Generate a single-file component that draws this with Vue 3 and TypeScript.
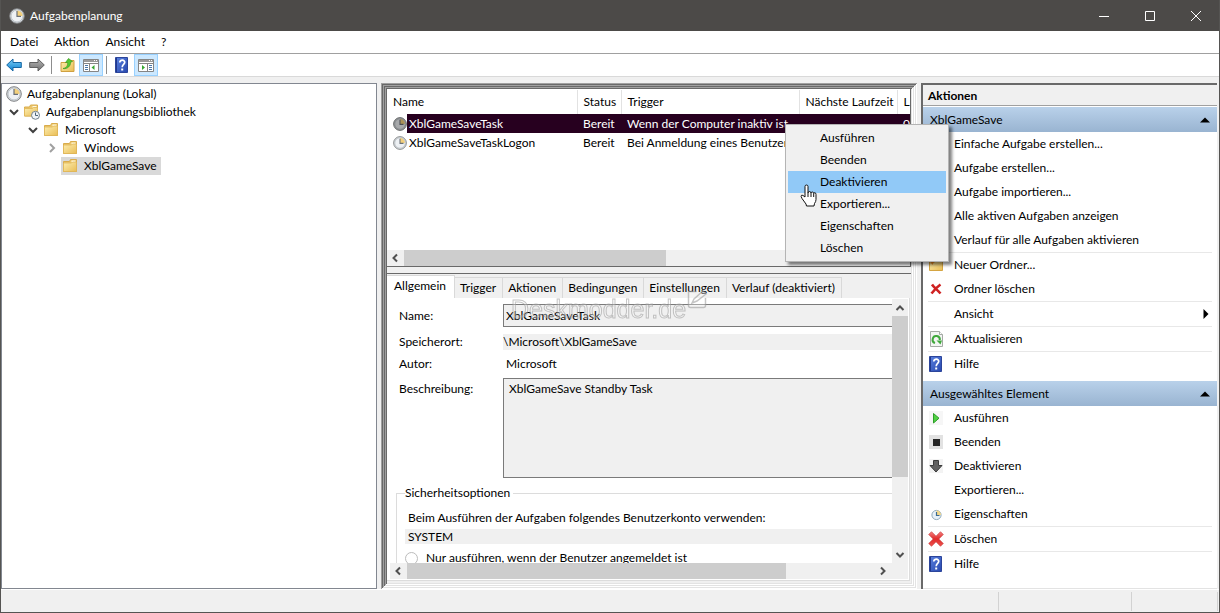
<script setup lang="ts">
import { ref } from 'vue'

interface TreeNode { label: string; icon: string; level: number; chevron: '' | 'open' | 'closed'; selected?: boolean }
interface Task { name: string; status: string; trigger: string; next: string; last: string; selected: boolean }
interface Action { label: string; icon?: string; separated?: boolean; submenu?: boolean }
interface ActionGroup { title: string; items: Action[] }

const menus: string[] = ['Datei', 'Aktion', 'Ansicht', '?']

const tree: TreeNode[] = [
  { label: 'Aufgabenplanung (Lokal)', icon: 'clock', level: 0, chevron: '' },
  { label: 'Aufgabenplanungsbibliothek', icon: 'folder-clock', level: 1, chevron: 'open' },
  { label: 'Microsoft', icon: 'folder', level: 2, chevron: 'open' },
  { label: 'Windows', icon: 'folder', level: 3, chevron: 'closed' },
  { label: 'XblGameSave', icon: 'folder', level: 3, chevron: '', selected: true },
]

const tasks: Task[] = [
  { name: 'XblGameSaveTask', status: 'Bereit', trigger: 'Wenn der Computer inaktiv ist.', next: '', last: '0', selected: true },
  { name: 'XblGameSaveTaskLogon', status: 'Bereit', trigger: 'Bei Anmeldung eines Benutzers', next: '', last: '', selected: false },
]

const tabs: string[] = ['Allgemein', 'Trigger', 'Aktionen', 'Bedingungen', 'Einstellungen', 'Verlauf (deaktiviert)']
const activeTab = ref('Allgemein')

const description = ref('XblGameSave Standby Task')

const contextItems: string[] = ['Ausführen', 'Beenden', 'Deaktivieren', 'Exportieren...', 'Eigenschaften', 'Löschen']
const hovered = ref('Deaktivieren')

const groups: ActionGroup[] = [
  {
    title: 'XblGameSave',
    items: [
      { label: 'Einfache Aufgabe erstellen...' },
      { label: 'Aufgabe erstellen...' },
      { label: 'Aufgabe importieren...' },
      { label: 'Alle aktiven Aufgaben anzeigen' },
      { label: 'Verlauf für alle Aufgaben aktivieren' },
      { label: 'Neuer Ordner...', icon: 'folder-new', separated: true },
      { label: 'Ordner löschen', icon: 'cross' },
      { label: 'Ansicht', separated: true, submenu: true },
      { label: 'Aktualisieren', icon: 'refresh', separated: true },
      { label: 'Hilfe', icon: 'help', separated: true },
    ],
  },
  {
    title: 'Ausgewähltes Element',
    items: [
      { label: 'Ausführen', icon: 'play' },
      { label: 'Beenden', icon: 'stop' },
      { label: 'Deaktivieren', icon: 'down' },
      { label: 'Exportieren...' },
      { label: 'Eigenschaften', icon: 'clock-small' },
      { label: 'Löschen', icon: 'cross-big', separated: true },
      { label: 'Hilfe', icon: 'help', separated: true },
    ],
  },
]
</script>

<template>
  <div class="window">
    <svg class="defs" aria-hidden="true">
      <defs>
        <linearGradient id="g-folder" x1="0" y1="0" x2="1" y2="1"><stop offset="0" stop-color="#fdeeb0" /><stop offset="1" stop-color="#e9bd55" /></linearGradient>
        <linearGradient id="g-blue" x1="0" y1="0" x2="0" y2="1"><stop offset="0" stop-color="#7fd0f7" /><stop offset="1" stop-color="#0b80cf" /></linearGradient>
        <linearGradient id="g-grey" x1="0" y1="0" x2="0" y2="1"><stop offset="0" stop-color="#b5b5b5" /><stop offset="1" stop-color="#707070" /></linearGradient>
        <linearGradient id="g-help" x1="0" y1="0" x2="1" y2="1"><stop offset="0" stop-color="#5b82e0" /><stop offset="1" stop-color="#2747ad" /></linearGradient>
        <linearGradient id="g-red" x1="0" y1="0" x2="0" y2="1"><stop offset="0" stop-color="#f58080" /><stop offset=".5" stop-color="#e02a2a" /><stop offset="1" stop-color="#ee5550" /></linearGradient>
        <symbol id="clock" viewBox="0 0 16 16">
          <circle cx="8" cy="8" r="7.3" fill="#d5dade" stroke="#808284" />
          <circle cx="8" cy="8" r="5.9" fill="#eef1f4" stroke="#b9bfc4" stroke-width=".8" />
          <path d="M8 8V2.4A5.6 5.6 0 0 1 13.6 8Z" fill="#f3d07c" />
          <path d="M8 3v5.4h4" fill="none" stroke="#6a7078" stroke-width="1.2" />
        </symbol>
        <symbol id="clock-small" viewBox="0 0 16 16">
          <circle cx="8.500" cy="9" r="4.600" fill="#e6f0f8" stroke="#8fa9bb" />
          <path d="M8.500 9V4.500A4.500 4.500 0 0 1 13 9Z" fill="#f3d788" />
          <path d="M8.500 6v3.500h3" fill="none" stroke="#3c6a92" stroke-width="1.200" />
        </symbol>
        <symbol id="folder" viewBox="0 0 16 16">
          <path d="M1.500 3.500h6l1-2h6v12h-13Z" fill="#edc76c" stroke="#d9ac4c" />
          <path d="M9.500 2.500h4v2h-4Z" fill="#fff8dc" />
          <path d="M1.500 5h8l1-1h4v9.500h-13Z" fill="url(#g-folder)" stroke="#e0b658" stroke-width=".8" />
        </symbol>
        <symbol id="folder-clock" viewBox="0 0 16 16">
          <path d="M.5 3h5l1-2h7v11H.5Z" fill="#edc76c" stroke="#d9ac4c" />
          <path d="M8.500 2h4v1.500h-4Z" fill="#fff8dc" />
          <path d="M.5 4.500h8l1-1h4V12H.5Z" fill="url(#g-folder)" stroke="#e0b658" stroke-width=".8" />
          <circle cx="11.500" cy="11.300" r="4" fill="#f0f5f9" stroke="#70808c" />
          <path d="M11.500 8.500v3h2.500" fill="none" stroke="#4c6478" />
        </symbol>
        <symbol id="folder-new" viewBox="0 0 16 16">
          <path d="M1.500 4.500h6l1-2h6v11h-13Z" fill="url(#g-folder)" stroke="#d5a542" />
          <path d="m4 3 1 2 2 .5-2 1L4.500 8l-1-1.500-2-.5 2-1Z" fill="#f08a1c" />
        </symbol>
        <symbol id="folder-up" viewBox="0 0 16 16">
          <path d="M2 5.500h6l1-2h6v11H2Z" fill="url(#g-folder)" stroke="#d0a040" />
          <path d="M4 11.500C7.500 11 9 8.500 8.500 5.500h-2L9.500 1.500l4 3-2 .7C12 8.500 8.500 12.500 4 11.500Z" fill="#55c832" stroke="#3b9a22" stroke-width=".7" />
        </symbol>
        <symbol id="back" viewBox="0 0 16 16"><path d="M.7 8 7 2v3.500h8.300v5H7V14Z" fill="url(#g-blue)" stroke="#1667a3" /></symbol>
        <symbol id="forward" viewBox="0 0 16 16"><path d="M15.300 8 9 2v3.500H.7v5H9V14Z" fill="url(#g-grey)" stroke="#616161" /></symbol>
        <symbol id="pane-left" viewBox="0 0 16 16">
          <path d="M.5 2.500h15v12H.5Z" fill="#fff" stroke="#858585" />
          <path d="M1 3h14v2H1Z" fill="#9a9a9a" /><path d="M11 3.500h1M13 3.500h1" stroke="#fff" />
          <path d="M1 6.500h14M6.500 6v8" stroke="#858585" />
          <path d="M2 8.500h3M2 10.500h3M2 12.500h3" stroke="#4a77a8" />
          <path d="M11.500 8v5L8.500 10.500Z" fill="#36a832" />
        </symbol>
        <symbol id="pane-right" viewBox="0 0 16 16">
          <path d="M.5 2.500h15v12H.5Z" fill="#fff" stroke="#858585" />
          <path d="M1 3h14v2H1Z" fill="#9a9a9a" /><path d="M11 3.500h1M13 3.500h1" stroke="#fff" />
          <path d="M1 6.500h14M9.500 6v8" stroke="#858585" />
          <path d="M11 8.500h3M11 10.500h3M11 12.500h3" stroke="#4a77a8" />
          <path d="M4 8v5L7 10.500Z" fill="#36a832" />
        </symbol>
        <symbol id="help" viewBox="0 0 16 16">
          <path d="M1.500.5h12v15h-12Z" fill="url(#g-help)" stroke="#2c459b" />
          <path d="M2.500 1v14" stroke="#22398c" />
          <path d="M5.800 5.500c0-3.200 5.200-3 4.900 0-.2 1.900-2.500 2-2.500 4.700" fill="none" stroke="#fff" stroke-width="1.700" />
          <path d="M7.200 11.500h2v2h-2Z" fill="#fff" />
        </symbol>
        <symbol id="cross" viewBox="0 0 16 16"><path d="M4 3.500c2 3 5 5 8.500 9M12.500 3.500c-3 2-6 5-9 9" fill="none" stroke="#cf2222" stroke-width="2.600" /></symbol>
        <symbol id="cross-big" viewBox="0 0 16 16"><path d="m3.500.7 4.500 4.500L12.500.7l2.800 2.800L10.800 8l4.500 4.500-2.800 2.800L8 10.800l-4.500 4.500-2.800-2.800L5.200 8 .7 3.500Z" fill="url(#g-red)" stroke="#c23030" stroke-width=".6" /></symbol>
        <symbol id="refresh" viewBox="0 0 16 16">
          <path d="M2.500.5h9l3 3v12h-12Z" fill="#f3f5f3" stroke="#a5aaa5" /><path d="M11.500.5v3h3" fill="#fff" stroke="#a5aaa5" />
          <path d="M7 12A3.600 3.600 0 1 1 11.800 9" fill="none" stroke="#3fa83b" stroke-width="2" /><path d="M8.500 9.500h5.500l-1.500 4Z" fill="#3fa83b" />
        </symbol>
        <symbol id="play" viewBox="0 0 16 16"><path d="M1 1h14v14H1Z" fill="#f6f6f6" /><path d="M5.500 3.500 11 8.200 5.500 13Z" fill="#4fd043" stroke="#2d9f28" /></symbol>
        <symbol id="stop" viewBox="0 0 16 16"><path d="M1 1h14v14H1Z" fill="#e2e2e2" /><path d="M5 5h7v7H5Z" fill="#262626" /></symbol>
        <symbol id="down" viewBox="0 0 16 16"><path d="M1 1h14v14H1Z" fill="#f3f3f3" /><path d="M5.500 2.500h5v5h3.500L8 14 2 7.500h3.500Z" fill="#626262" stroke="#3c3c3c" /></symbol>
        <symbol id="chev-left" viewBox="0 0 16 16"><path d="M10 4.500 6.500 8l3.500 3.500" fill="none" stroke="#505050" stroke-width="2" /></symbol>
        <symbol id="chev-right" viewBox="0 0 16 16"><path d="M6 4.500 9.500 8 6 11.500" fill="none" stroke="#505050" stroke-width="2" /></symbol>
        <symbol id="chev-up" viewBox="0 0 16 16"><path d="M4.500 10 8 6.500l3.500 3.500" fill="none" stroke="#505050" stroke-width="2" /></symbol>
        <symbol id="chev-down" viewBox="0 0 16 16"><path d="M4.500 6 8 9.500 11.500 6" fill="none" stroke="#505050" stroke-width="2" /></symbol>
      </defs>
    </svg>

    <header class="titlebar">
      <svg class="icon"><use href="#clock" /></svg>
      <span class="title">Aufgabenplanung</span>
      <button class="caption" aria-label="Minimieren"><svg viewBox="0 0 10 10"><path d="M0 5.500h10" /></svg></button>
      <button class="caption" aria-label="Maximieren"><svg viewBox="0 0 10 10"><path d="M.5.5h9v9h-9Z" /></svg></button>
      <button class="caption" aria-label="Schließen"><svg viewBox="0 0 10 10"><path d="m0 0 10 10M10 0 0 10" /></svg></button>
    </header>

    <nav class="menubar">
      <button v-for="m in menus" :key="m">{{ m }}</button>
    </nav>

    <div class="toolbar">
      <button class="arrow" aria-label="Zurück"><svg class="icon"><use href="#back" /></svg></button>
      <button class="arrow" aria-label="Vorwärts"><svg class="icon"><use href="#forward" /></svg></button>
      <i class="divider"></i>
      <button aria-label="Übergeordneter Ordner"><svg class="icon"><use href="#folder-up" /></svg></button>
      <button class="on" aria-label="Strukturbereich"><svg class="icon"><use href="#pane-left" /></svg></button>
      <i class="divider"></i>
      <button aria-label="Hilfe"><svg class="icon"><use href="#help" /></svg></button>
      <button class="on" aria-label="Aktionsbereich"><svg class="icon"><use href="#pane-right" /></svg></button>
    </div>

    <main class="body">
      <aside class="tree">
        <div v-for="n in tree" :key="n.label" class="node" :class="'level-' + n.level">
          <svg v-if="n.level" class="chevron" viewBox="0 0 16 16">
            <path v-if="n.chevron === 'open'" d="m4 6 4 4 4-4" stroke="#404040" />
            <path v-if="n.chevron === 'closed'" d="m6 4 4 4-4 4" stroke="#a0a0a0" />
          </svg>
          <button class="leaf" :class="{ selected: n.selected }">
            <svg class="icon"><use :href="'#' + n.icon" /></svg><span>{{ n.label }}</span>
          </button>
        </div>
      </aside>

      <section class="center">
        <div class="list">
          <div class="clip">
            <table>
              <colgroup><col class="c-name" /><col class="c-status" /><col class="c-trigger" /><col class="c-next" /><col class="c-last" /></colgroup>
              <thead>
                <tr><th>Name</th><th>Status</th><th>Trigger</th><th>Nächste Laufzeit</th><th>L</th></tr>
              </thead>
              <tbody>
                <tr v-for="t in tasks" :key="t.name" :class="{ selected: t.selected }">
                  <td><span class="cell"><svg class="icon"><use href="#clock" /></svg><span class="name">{{ t.name }}</span></span></td>
                  <td>{{ t.status }}</td><td>{{ t.trigger }}</td><td>{{ t.next }}</td><td>{{ t.last }}</td>
                </tr>
              </tbody>
            </table>
          </div>
          <div class="hbar">
            <button aria-label="Nach links"><svg class="icon"><use href="#chev-left" /></svg></button>
            <div class="track"><div class="thumb list-thumb"></div></div>
            <button aria-label="Nach rechts"><svg class="icon"><use href="#chev-right" /></svg></button>
          </div>
        </div>

        <div class="details">
          <div class="tabs" role="tablist">
            <button v-for="t in tabs" :key="t" role="tab" :aria-selected="t === activeTab" :class="{ active: t === activeTab }" @click="activeTab = t">{{ t }}</button>
          </div>
          <div class="panel">
            <form class="form" @submit.prevent>
              <div class="fields">
                <label for="f-name">Name:</label>
                <input id="f-name" class="boxed" readonly value="XblGameSaveTask" />
                <label for="f-path">Speicherort:</label>
                <input id="f-path" class="path" readonly value="\Microsoft\XblGameSave" />
                <label for="f-author">Autor:</label>
                <input id="f-author" class="author" readonly value="Microsoft" />
                <label for="f-desc" class="top">Beschreibung:</label>
                <textarea id="f-desc" v-model="description" readonly></textarea>
              </div>
              <fieldset>
                <legend>Sicherheitsoptionen</legend>
                <label for="f-user" class="user-label">Beim Ausführen der Aufgaben folgendes Benutzerkonto verwenden:</label>
                <input id="f-user" class="user" readonly value="SYSTEM" />
                <label class="radio"><input type="radio" name="logon" disabled /><span>Nur ausführen, wenn der Benutzer angemeldet ist</span></label>
              </fieldset>
            </form>
            <div class="vbar">
              <button aria-label="Nach oben"><svg class="icon"><use href="#chev-up" /></svg></button>
              <div class="track"><div class="thumb form-vthumb"></div></div>
              <button aria-label="Nach unten"><svg class="icon"><use href="#chev-down" /></svg></button>
            </div>
            <div class="hbar">
              <button aria-label="Nach links"><svg class="icon"><use href="#chev-left" /></svg></button>
              <div class="track"><div class="thumb form-hthumb"></div></div>
              <button aria-label="Nach rechts"><svg class="icon"><use href="#chev-right" /></svg></button>
            </div>
          </div>
          <div class="watermark">
            <span>Deskmodder.de</span>
            <svg viewBox="0 0 22 20"><path d="M2.500 1.500h8M2.500 1.500v14q0 2 2 2h13q2 0 2-2V8M6 13l2-4 9-8 3 3-9 7Z" /></svg>
          </div>
        </div>
      </section>

      <aside class="actions">
        <h2>Aktionen</h2>
        <section v-for="g in groups" :key="g.title" class="group">
          <button class="group-title"><span>{{ g.title }}</span><svg viewBox="0 0 10 6"><path d="M0 5.500 5 .5l5 5Z" /></svg></button>
          <button v-for="a in g.items" :key="a.label" class="action" :class="{ separated: a.separated }">
            <svg class="icon"><use v-if="a.icon" :href="'#' + a.icon" /></svg>
            <span>{{ a.label }}</span>
            <svg v-if="a.submenu" class="sub" viewBox="0 0 6 10"><path d="M.5 0v10l5-5Z" /></svg>
          </button>
        </section>
      </aside>
    </main>

    <footer class="status"><span></span><span></span><span></span></footer>

    <div class="context" role="menu">
      <button v-for="c in contextItems" :key="c" role="menuitem" :class="{ hot: c === hovered }" @mouseenter="hovered = c">{{ c }}</button>
      <svg class="hand" viewBox="0 0 17 23">
        <path d="M5 13V2.500q0-1.500 1.500-1.500T8 2.500V9q.2-1.500 1.500-1.500T11 9q.2-1 1.400-1t1.300 1.500q.2-.8 1.200-.8T16 10.500v5q0 2-1.500 4l-.5 2.500H6.500L6 20l-4-5.500Q.5 12 1.500 11.300T5 13Z" />
        <path d="M8 9v4M11 9v4M13.700 9.500V13" />
      </svg>
    </div>
  </div>
</template>

<style>
html, body { margin: 0; }
</style>

<style scoped>
.window {
  position: relative; display: flex; flex-direction: column; height: 100vh; box-sizing: border-box;
  border: 1px solid #555452; border-top: 0; background: #f0f0f0; color: #000;
  font: 12px/16px "Segoe UI", Lato, "Open Sans", sans-serif; overflow: hidden;
}
.window *, .window *::before { box-sizing: border-box; }
button, input, textarea { margin: 0; padding: 0; border: 0; background: none; border-radius: 0; color: inherit; font: inherit; text-align: left; outline: 0; white-space: nowrap; }
.defs { position: absolute; width: 0; height: 0; }
.icon { width: 16px; height: 16px; flex: none; display: block; }

.titlebar { display: flex; align-items: center; height: 31px; flex: none; background: #4c4a48; color: #fff; padding-left: 8px; }
.title { flex: 1; padding-left: 5px; }
.caption { width: 46px; height: 30px; display: flex; align-items: center; justify-content: center; }
.caption svg { width: 10px; height: 10px; fill: none; stroke: #fff; }

.menubar { display: flex; height: 23px; flex: none; background: #fff; border-bottom: 1px solid #a0a0a0; padding-left: 1px; }
.menubar button { padding: 0 8px; }

.toolbar { display: flex; align-items: center; height: 23px; flex: none; background: #fff; border-bottom: 1px solid #d9d9d9; padding-left: 1px; }
.toolbar button { width: 24px; height: 22px; display: flex; align-items: center; justify-content: center; }
.toolbar .arrow { width: 23px; }
.toolbar .on { background: #cce8ff; border: 1px solid #99d1ff; }
.divider { width: 1px; height: 18px; background: #8d8d8d; margin: 0 3px; }

.body { display: grid; grid-template-columns: 376fr 536fr 296fr; gap: 4px; flex: 1; min-height: 0; padding: 6px 2px 0 0; }

.tree { background: #fff; border: 1px solid #828790; padding: 1px 0 0 4px; min-width: 0; }
.node { display: flex; align-items: center; height: 18px; }
.level-2 { padding-left: 19px; }
.level-3 { padding-left: 38px; }
.chevron { width: 16px; height: 16px; margin-right: 1px; fill: none; stroke-width: 2; }
.leaf { display: flex; align-items: center; height: 18px; padding: 0 4px 0 1px; gap: 6px; }
.level-0 .leaf { padding-left: 0; gap: 5px; }
.leaf.selected { background: #d9d9d9; }

.center {
  display: flex; flex-direction: column; min-width: 0; min-height: 0; padding: 6px 6px 8px;
  box-shadow: inset 1px 1px #a0a0a0, inset -1px -1px #fff, inset 2px 2px #696969, inset -2px -2px #e3e3e3,
    inset 3px 3px #a0a0a0, inset -3px -3px #fff, inset 4px 4px #696969, inset -4px -4px #e3e3e3,
    inset 5px 5px #a0a0a0, inset -5px -5px #fff, inset 6px 6px #696969, inset -6px -6px #e3e3e3;
}
.list { display: flex; flex-direction: column; height: 178px; flex: none; background: #fff; border-right: 1px solid #696969; border-bottom: 1px solid #696969; padding-top: 1px; }
.clip { flex: 1; overflow: hidden; min-height: 0; }
table { table-layout: fixed; border-collapse: collapse; width: 610px; }
.c-name { width: 190px; }
.c-status { width: 44px; }
.c-trigger { width: 178px; }
.c-next { width: 98px; }
.c-last { width: 100px; }
th { height: 24px; padding: 0 0 0 6px; font-weight: normal; text-align: left; border-right: 1px solid #e2e2e2; white-space: nowrap; }
td { height: 19px; padding: 0 0 0 6px; white-space: nowrap; overflow: hidden; }
.cell { display: flex; align-items: center; height: 19px; }
.cell .icon { width: 14px; height: 14px; }
.name { flex: 1; line-height: 19px; padding-left: 2px; }
tr.selected td { background: #27001f; color: #fff; }
tr.selected td:first-child { background: #fff; }
tr.selected .name { background: #27001f; }
tr.selected .icon { filter: brightness(.7); }

.hbar { display: flex; height: 16px; background: #f0f0f0; }
.hbar button { width: 17px; }
.track { flex: 1; min-width: 0; min-height: 0; }
.thumb { background: #cdcdcd; }
.hbar .thumb { height: 16px; }
.list-thumb { width: 53.500%; }

.details { position: relative; display: flex; flex-direction: column; flex: 1; min-height: 0; margin-top: 6px; border-top: 1px solid #696969; background: #f0f0f0; padding: 1px 1px 0 0; }
.tabs { display: flex; align-items: flex-end; height: 23px; flex: none; }
.tabs button { height: 21px; padding: 0 6px 0 5px; border: 1px solid #d9d9d9; border-left: 0; border-bottom: 0; }
.tabs .active { height: 23px; background: #fff; padding: 0 8px 2px 7px; }
.panel { display: grid; grid-template-columns: 1fr 16px; grid-template-rows: 1fr 16px; flex: 1; min-height: 0; background: #fff; border-right: 1px solid #dcdcdc; border-bottom: 1px solid #dcdcdc; padding: 1px 1px 1px 3px; }
.form { min-width: 0; min-height: 0; overflow: hidden; padding: 5px 0 0 6px; }
.fields { display: grid; grid-template-columns: 104px 1fr; grid-template-rows: 23px 16px 14px 100px; row-gap: 7px; align-items: center; padding-left: 3px; }
.boxed { height: 23px; width: 100%; background: #f0f0f0; border: 1px solid #7a7a7a; border-right: 0; padding-left: 2px; }
.path { height: 16px; width: 100%; background: #f0f0f0; }
.author { padding-left: 3px; width: 100%; }
.top { align-self: start; padding-top: 3px; }
textarea { display: block; width: 100%; height: 100px; resize: none; background: #f0f0f0; border: 1px solid #7a7a7a; border-right: 0; padding: 2px 5px; overflow: hidden; }
fieldset { margin: 7px 0 0; padding: 9px 0 0 8px; border: 1px solid #dcdcdc; border-right: 0; min-width: 0; height: 100px; }
legend { padding: 0 3px 0 0; }
.user-label { display: block; padding-left: 3px; }
.user { display: block; width: 100%; height: 15px; margin-top: 3px; background: #f0f0f0; padding-left: 3px; }
.radio { display: flex; align-items: center; gap: 8px; height: 16px; margin-top: 6px; }
.radio input { appearance: none; width: 13px; height: 13px; border: 1px solid #bcbcbc; border-radius: 50%; background: #fff; }
.vbar { display: flex; flex-direction: column; background: #f0f0f0; }
.vbar button { height: 17px; }
.form-vthumb { height: 70%; }
.panel .hbar { grid-column: 1 / 3; padding-right: 16px; }
.form-hthumb { width: 81%; }

.watermark { position: absolute; left: 124px; top: 16px; display: flex; pointer-events: none; opacity: .6; }
.watermark span { font: 25px/38px "Liberation Sans Narrow", "Liberation Sans", sans-serif; color: rgba(255, 255, 255, .5); -webkit-text-stroke: 1px #a0a0a0; }
.watermark svg { width: 22px; height: 20px; fill: rgba(255, 255, 255, .5); stroke: #a0a0a0; stroke-width: 1.500; }

.actions { border: solid #696969; border-width: 2px 0 0 2px; background: #fff; min-width: 0; box-shadow: inset 0 -1px #e3e3e3; }
h2 { margin: 0; height: 21px; padding: 1px 0 0 5px; font-size: 12px; line-height: 20px; background: #f0f0f0; border-bottom: 1px solid #a0a0a0; }
.group { display: flex; flex-direction: column; padding-bottom: 5px; }
.actions h2 + .group { margin-top: 1px; }
.group-title { display: flex; align-items: center; justify-content: space-between; height: 25px; padding: 0 7px; background: linear-gradient(#b9d1ea, #99b4d1); }
.group-title svg { width: 10px; height: 6px; }
.action { position: relative; display: flex; align-items: center; height: 24px; padding: 0 8px 0 5px; gap: 10px; }
.action span { flex: 1; }
.action.separated { height: 25px; padding-top: 1px; }
.action.separated::before { content: ""; position: absolute; top: 0; left: 5px; right: 5px; border-top: 1px solid #e8e8e8; }
.sub { width: 6px; height: 10px; }

.status { display: flex; height: 23px; flex: none; padding: 2px 1px 1px 0; border-top: 1px solid #fff; }
.status span { border-right: 1px solid #d2d2d2; }
.status span:nth-child(1) { flex: 999; }
.status span:nth-child(2) { flex: 133; }
.status span:nth-child(3) { flex: 85; }

.context { position: absolute; left: 784px; top: 124px; width: 164px; display: flex; flex-direction: column; padding: 2px; background: #f0f0f0; border: 1px solid #b4b4b4; box-shadow: 3px 3px 3px rgba(0, 0, 0, .5); }
.context button { height: 22px; padding-left: 32px; }
.context .hot { background: #91c9f7; }
.hand { position: absolute; left: 14px; top: 59px; width: 17px; height: 23px; fill: #fff; stroke: #111; }
</style>
